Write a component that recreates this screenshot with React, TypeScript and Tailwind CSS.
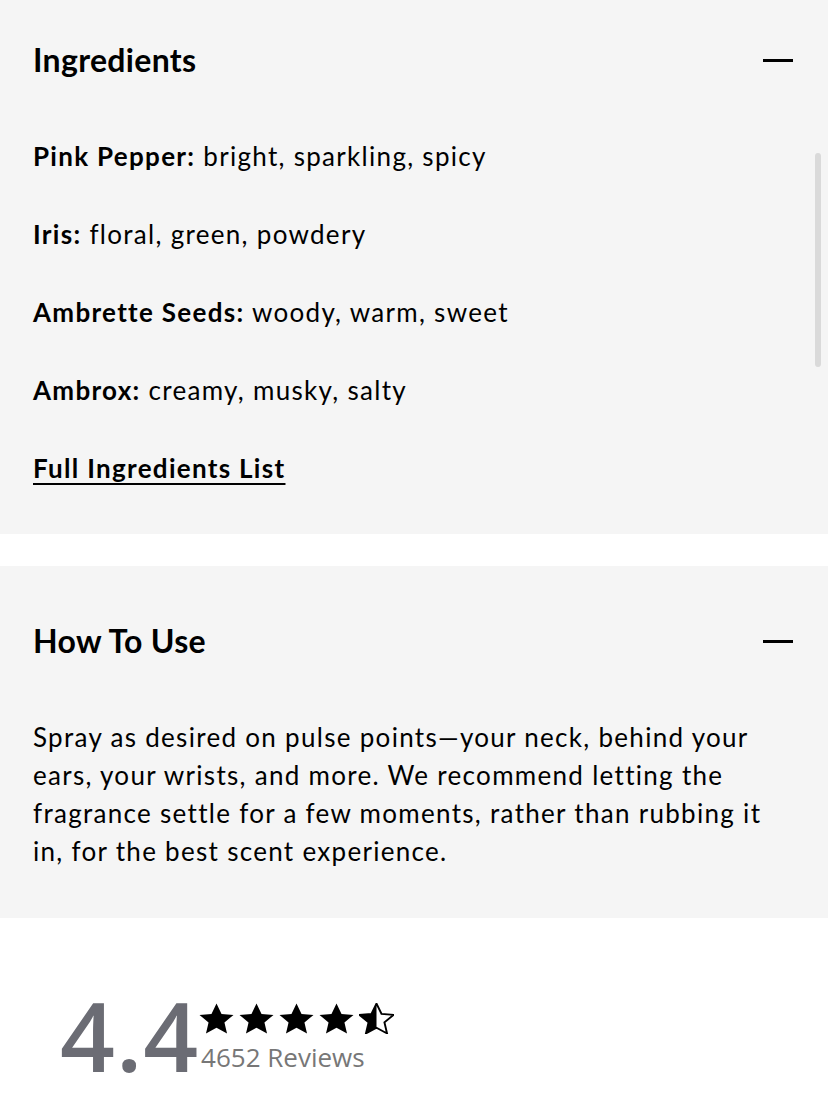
import React from "react";

const ingredients = [
  { name: "Pink Pepper:", notes: "bright, sparkling, spicy" },
  { name: "Iris:", notes: "floral, green, powdery" },
  { name: "Ambrette Seeds:", notes: "woody, warm, sweet" },
  { name: "Ambrox:", notes: "creamy, musky, salty" },
];

function Minus() {
  return <span className="block h-[3px] w-[30px] bg-black" />;
}

function Star({ half = false, id }: { half?: boolean; id: string }) {
  const d =
    "M12 1.6l3.1 6.9 7.4.7-5.6 5 1.6 7.4L12 17.8l-6.5 3.8 1.6-7.4-5.6-5 7.4-.7z";
  return (
    <svg viewBox="1.2 1.2 21.6 20.8" preserveAspectRatio="none" className="h-[31px] w-[35px]">
      {half ? (
        <>
          <defs>
            <clipPath id={id}>
              <rect x="0" y="0" width="12" height="24" />
            </clipPath>
          </defs>
          <path d={d} fill="none" stroke="#000" strokeWidth="1.2" />
          <path d={d} fill="#000" clipPath={`url(#${id})`} />
        </>
      ) : (
        <path d={d} fill="#000" />
      )}
    </svg>
  );
}

export default function App() {
  return (
    <div className="min-h-[1104px] bg-white text-black font-['Lato','Noto_Sans',sans-serif]">
      {/* Ingredients */}
      <section className="relative bg-[#f5f5f5] pl-[33px] pr-[35px] pt-[40px] pb-[47px]">
        <div className="flex h-[40px] items-center justify-between">
          <h2 className="text-[32px] font-bold leading-[40px] tracking-[0.01em]">Ingredients</h2>
          <Minus />
        </div>
        <div className="mt-[57px] flex flex-col items-start gap-[40px] text-[26px] leading-[38px] tracking-[0.05em]">
          {ingredients.map((item) => (
            <p key={item.name}>
              <span className="font-bold">{item.name}</span> {item.notes}
            </p>
          ))}
          <a href="#" className="font-bold underline underline-offset-[5px] decoration-2">
            Full Ingredients List
          </a>
        </div>
        <div className="absolute right-[7px] top-[153px] h-[214px] w-[6px] rounded-full bg-[#dadada]" />
      </section>

      <div className="h-[32px]" />

      {/* How To Use */}
      <section className="bg-[#f5f5f5] pl-[33px] pr-[35px] pt-[55px] pb-[48px]">
        <div className="flex h-[40px] items-center justify-between">
          <h2 className="text-[32px] font-bold leading-[40px] tracking-[0.01em]">How To Use</h2>
          <Minus />
        </div>
        <p className="mt-[57px] text-[26px] leading-[38px] tracking-[0.05em]">
          Spray as desired on pulse points—your neck, behind your ears, your wrists, and more. We
          recommend letting the fragrance settle for a few moments, rather than rubbing it in, for
          the best scent experience.
        </p>
      </section>

      {/* Rating */}
      <section className="flex items-start pl-[60px] pt-[69px] font-['Open_Sans',sans-serif]">
        <span className="text-[96px] font-semibold leading-none tracking-[1px] text-[#6b6c74]">
          4.4
        </span>
        <div className="mt-[16px] flex flex-col">
          <div className="flex gap-[5px]">
            <Star id="s1" />
            <Star id="s2" />
            <Star id="s3" />
            <Star id="s4" />
            <Star id="s5" half />
          </div>
          <span className="mt-[6px] ml-[2px] text-[26px] leading-[34px] text-[#777]">
            4652 Reviews
          </span>
        </div>
      </section>
    </div>
  );
}
